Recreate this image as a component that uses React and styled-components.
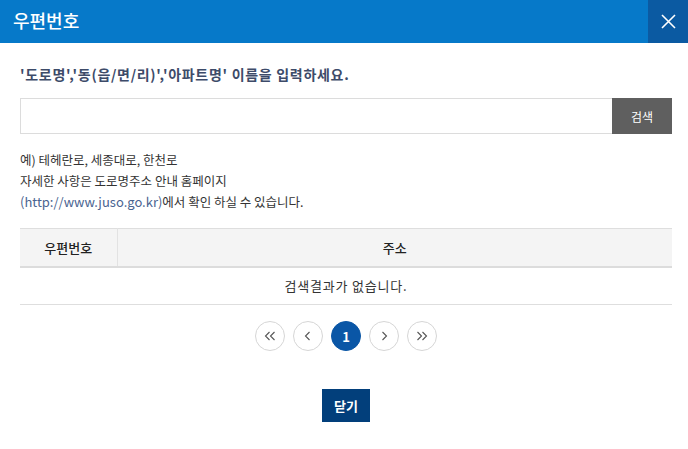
import React from 'react';
import styled, { createGlobalStyle } from 'styled-components';

const GlobalStyle = createGlobalStyle`
	* { box-sizing: border-box; }
	body {
		margin: 0;
		background: #fff;
		font-family: 'Noto Sans CJK KR', 'Noto Sans', sans-serif;
		color: #333;
	}
`;

export default function App() {
	return (
		<>
			<GlobalStyle />
			<Popup>
				<Header>
					<Title>우편번호</Title>
					<CloseX aria-label='닫기'>
						<svg width='15' height='15' viewBox='0 0 15 15'>
							<path d='M1 1L14 14M14 1L1 14' stroke='#fff' strokeWidth='1.6' fill='none' />
						</svg>
					</CloseX>
				</Header>
				<Body>
					<Guide>'도로명','동(읍/면/리)','아파트명' 이름을 입력하세요.</Guide>
					<SearchRow>
						<SearchInput type='text' />
						<SearchButton>검색</SearchButton>
					</SearchRow>
					<Example>
						<p>예) 테헤란로, 세종대로, 한천로</p>
						<p>자세한 사항은 도로명주소 안내 홈페이지</p>
						<p>
							<UrlLink>(http://www.juso.go.kr)</UrlLink>에서 확인 하실 수 있습니다.
						</p>
					</Example>
					<Table>
						<thead>
							<tr>
								<Th width='97px'>우편번호</Th>
								<Th>주소</Th>
							</tr>
						</thead>
						<tbody>
							<tr>
								<Td colSpan={2}>검색결과가 없습니다.</Td>
							</tr>
						</tbody>
					</Table>
					<Paging>
						<PageBtn aria-label='처음'>
							<svg width='12' height='10' viewBox='0 0 12 10'>
								<path d='M5.5 1L1.5 5L5.5 9M10.5 1L6.5 5L10.5 9' stroke='#555' strokeWidth='1.1' fill='none' />
							</svg>
						</PageBtn>
						<PageBtn aria-label='이전'>
							<svg width='8' height='10' viewBox='0 0 8 10'>
								<path d='M5.5 1L1.5 5L5.5 9' stroke='#555' strokeWidth='1.1' fill='none' />
							</svg>
						</PageBtn>
						<PageBtn $active>1</PageBtn>
						<PageBtn aria-label='다음'>
							<svg width='8' height='10' viewBox='0 0 8 10'>
								<path d='M2.5 1L6.5 5L2.5 9' stroke='#555' strokeWidth='1.1' fill='none' />
							</svg>
						</PageBtn>
						<PageBtn aria-label='마지막'>
							<svg width='12' height='10' viewBox='0 0 12 10'>
								<path d='M1.5 1L5.5 5L1.5 9M6.5 1L10.5 5L6.5 9' stroke='#555' strokeWidth='1.1' fill='none' />
							</svg>
						</PageBtn>
					</Paging>
					<Footer>
						<CloseButton>닫기</CloseButton>
					</Footer>
				</Body>
			</Popup>
		</>
	);
}

const Popup = styled.div`
	width: 688px;
`;

const Header = styled.div`
	display: flex;
	align-items: stretch;
	justify-content: space-between;
	height: 43px;
	background: #0679c9;
`;

const Title = styled.h1`
	margin: 0;
	padding-left: 13px;
	font-size: 18px;
	font-weight: 500;
	line-height: 40px;
	color: #fff;
`;

const CloseX = styled.button`
	width: 40px;
	border: 0;
	padding: 0;
	background: #0b5aa2;
	display: flex;
	align-items: center;
	justify-content: center;
	cursor: pointer;
`;

const Body = styled.div`
	padding: 21px 16px 0 20px;
`;

const Guide = styled.p`
	margin: 0;
	font-size: 14px;
	font-weight: 700;
	line-height: 20px;
	letter-spacing: 0.7px;
	color: #3d4b69;
`;

const SearchRow = styled.div`
	display: flex;
	margin-top: 14px;
	height: 36px;
`;

const SearchInput = styled.input`
	flex: 1;
	height: 100%;
	border: 1px solid #dcdcdc;
	border-right: 0;
	outline: none;
	padding: 0 10px;
	font-family: inherit;
`;

const SearchButton = styled.button`
	width: 60px;
	border: 0;
	background: #5f5f5f;
	color: #fff;
	font-family: inherit;
	font-size: 12px;
	cursor: pointer;
`;

const Example = styled.div`
	margin-top: 15px;
	font-size: 12.5px;
	line-height: 21px;
	color: #333;
	p {
		margin: 0;
	}
`;

const UrlLink = styled.span`
	font-size: 13px;
	color: #4a6491;
`;

const Table = styled.table`
	width: 100%;
	margin-top: 16px;
	border-collapse: collapse;
	border-top: 1px solid #dedede;
	font-size: 13px;
`;

const Th = styled.th`
	width: ${(p) => p.width || 'auto'};
	height: 38px;
	background: #f4f4f4;
	border-bottom: 2px solid #dcdcdc;
	font-weight: 500;
	color: #222;
	& + & {
		border-left: 1px solid #e2e2e2;
	}
`;

const Td = styled.td`
	height: 38px;
	text-align: center;
	letter-spacing: 0.8px;
	border-bottom: 1px solid #dedede;
	color: #333;
`;

const Paging = styled.div`
	display: flex;
	justify-content: center;
	gap: 8px;
	margin-top: 16px;
`;

const PageBtn = styled.button`
	width: 30px;
	height: 30px;
	padding: 0;
	border-radius: 50%;
	display: flex;
	align-items: center;
	justify-content: center;
	border: 1px solid ${(p) => (p.$active ? '#0a56a6' : '#d6d6d6')};
	background: ${(p) => (p.$active ? '#0a56a6' : '#fff')};
	color: #fff;
	font-family: inherit;
	font-size: 13px;
	font-weight: 700;
	cursor: pointer;
`;

const Footer = styled.div`
	display: flex;
	justify-content: center;
	margin-top: 38px;
`;

const CloseButton = styled.button`
	width: 48px;
	height: 33px;
	border: 0;
	background: #023f7b;
	color: #fff;
	font-family: inherit;
	font-size: 13px;
	font-weight: 700;
	cursor: pointer;
`;
